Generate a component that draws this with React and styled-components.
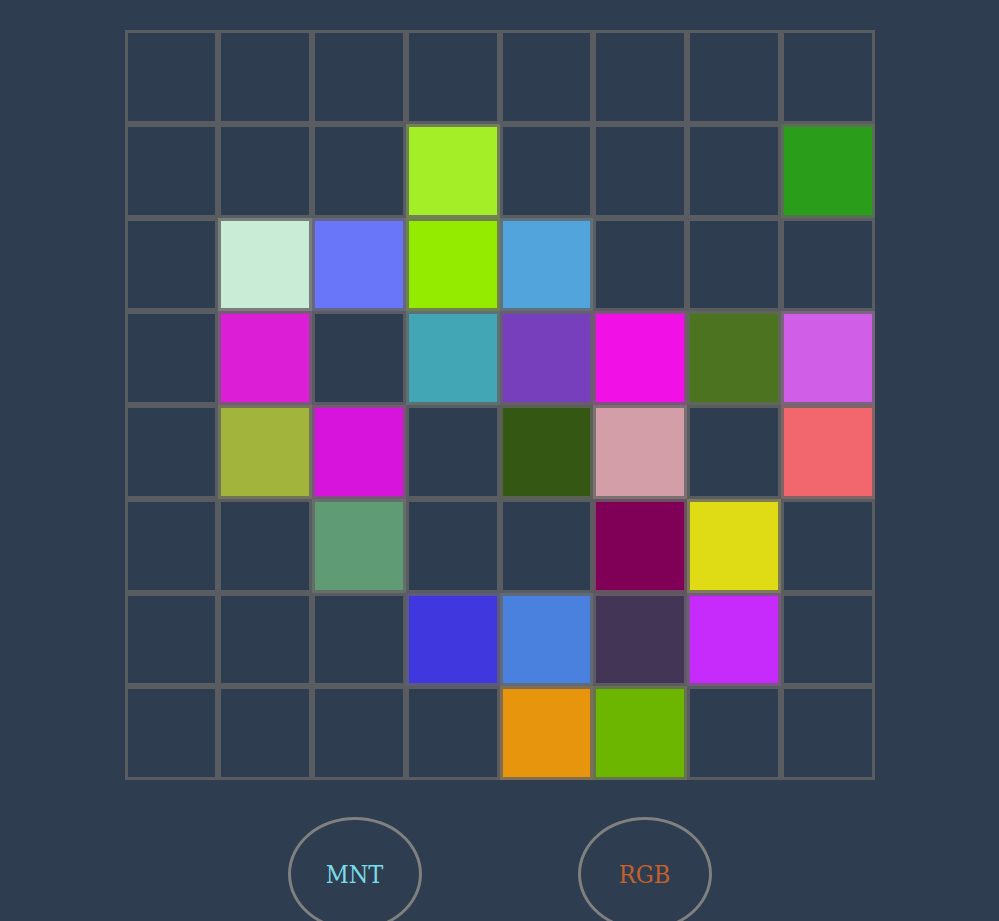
import React from 'react'
import styled, {createGlobalStyle} from 'styled-components'

const Global = createGlobalStyle`
  body {
    margin: 0;
    background: #2e3d50;
    font-family: 'DejaVu Serif', serif;
  }
`

const Page = styled.div`
  display: flex;
  flex-direction: column;
  align-items: center;
  padding-top: 30px;
`

const Board = styled.div`
  display: grid;
  grid-template-columns: repeat(8, 1fr);
  grid-template-rows: repeat(8, 93.75px);
  width: 750px;
`

const Cell = styled.div`
  box-sizing: border-box;
  border: 3px solid rgba(100, 100, 100, 0.8);
  background: ${props => props.color || 'transparent'};
`

const Buttons = styled.div`
  display: flex;
  gap: 156px;
  margin-top: 37px;
`

const Oval = styled.div`
  box-sizing: border-box;
  width: 134px;
  height: 114px;
  border: 3px solid #808080;
  border-radius: 50%;
  display: flex;
  align-items: center;
  justify-content: center;
  font-family: 'DejaVu Serif Condensed', 'DejaVu Serif', serif;
  font-stretch: condensed;
  font-size: 25px;
  color: ${props => props.color};
`

const colors = {
  '1-3': '#a3ee26', '1-7': '#2a9d1a',
  '2-1': '#c9ecd7', '2-2': '#6a76fa', '2-3': '#95eb00', '2-4': '#52a4dc',
  '3-1': '#dc1ed6', '3-3': '#42a6b5', '3-4': '#773fbb', '3-5': '#f110e6', '3-6': '#4b7320', '3-7': '#d05ee6',
  '4-1': '#a3b43c', '4-2': '#d714db', '4-4': '#345713', '4-5': '#d49ea8', '4-7': '#f2666e',
  '5-2': '#5f9b74', '5-5': '#800058', '5-6': '#dfdc15',
  '6-3': '#4137de', '6-4': '#4a81de', '6-5': '#433556', '6-6': '#c72bfb',
  '7-4': '#e8950e', '7-5': '#6cb600',
}

export default function App() {
  const cells = []
  for (let r = 0; r < 8; r++) {
    for (let c = 0; c < 8; c++) {
      cells.push(<Cell key={r + '-' + c} color={colors[r + '-' + c]} />)
    }
  }
  return (
    <Page>
      <Global />
      <Board>{cells}</Board>
      <Buttons>
        <Oval color="#7adce8">MNT</Oval>
        <Oval color="#c8602a">RGB</Oval>
      </Buttons>
    </Page>
  )
}
